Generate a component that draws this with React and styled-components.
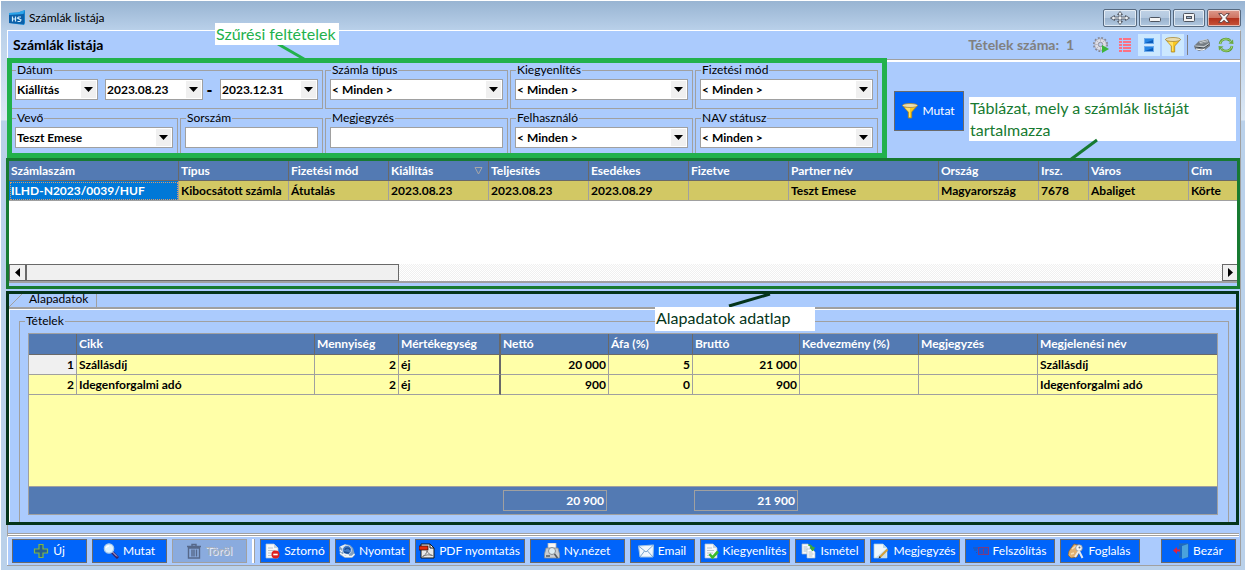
import React from 'react';
import styled, { createGlobalStyle, css } from 'styled-components';

const GlobalStyle = createGlobalStyle`
  *, *::before, *::after { box-sizing: border-box; }
  body {
    margin: 0;
    font-family: Lato, "Liberation Sans", sans-serif;
    font-size: 12px;
    line-height: 14px;
    color: #000;
    background: #bad1ea;
  }
  button, input, select { font: inherit; color: inherit; }
`;

const panel = '#abcbfd';
const line = '#a0a0a0';
const dark = '#696969';
const headerBlue = '#537ab3';

const Window = styled.div`
  position: relative;
  display: flex;
  flex-direction: column;
  min-height: 100vh;
  overflow: hidden;
  padding: 0 4px 4px 6px;
  border-top: 1px solid #fff;
  border-left: 1px solid #fff;
  background: linear-gradient(#98b4d2 0, #bad1ea 30px, #dce8f5 119px, #bad1ea 120px);
`;

const TitleBar = styled.header`
  display: flex;
  align-items: center;
  gap: 4px;
  height: 29px;
  padding: 5px 0 0 2px;
`;

const WindowTitle = styled.span`
  flex: 1;
`;

const WindowButtons = styled.div`
  display: flex;
  gap: 2px;
  align-self: flex-start;
  margin-top: 3px;
`;

const WindowButton = styled.button`
  display: flex;
  align-items: center;
  justify-content: center;
  width: ${(p) => (p.$wide ? 34 : 32)}px;
  height: 18px;
  padding: 0;
  border: 1px solid #56697f;
  border-radius: 2px;
  box-shadow: inset 0 0 0 1px rgba(255, 255, 255, 0.6);
  background: ${(p) =>
    p.$close
      ? 'linear-gradient(#dd9a8c, #cf7462 48%, #b2301b 50%, #c8543a)'
      : 'linear-gradient(#bfd2e6, #b3c8df 48%, #98b1cc 50%, #b2c9e0)'};
`;

const Client = styled.main`
  display: flex;
  flex: 1;
  flex-direction: column;
  border-top: 1px solid #fff;
  border-right: 1px solid ${line};
  border-bottom: 1px solid ${line};
  background: ${panel};
`;

const HeaderBar = styled.div`
  display: flex;
  align-items: center;
  gap: 2px;
  height: 27px;
  padding: 1px 3px 0 5px;
  border-left: 1px solid #fff;
`;

const PageTitle = styled.h1`
  flex: 1;
  margin: 0;
  font-size: 14px;
  font-weight: 700;
`;

const Count = styled.span`
  margin-right: 14px;
  font-size: 14px;
  font-weight: 700;
  color: #808080;
  white-space: pre;
`;

const ToolButton = styled.button`
  display: flex;
  align-items: center;
  justify-content: center;
  width: 22px;
  height: 22px;
  padding: 0;
  border: 0;
  background: ${(p) => (p.$on ? '#cce8ff' : 'transparent')};
`;

const ToolSeparator = styled.i`
  width: 1px;
  height: 20px;
  margin: 0 1px;
  background: #7f7f7f;
`;

const FilterRow = styled.div`
  display: flex;
  height: 100px;
`;

const FilterBox = styled.form`
  display: grid;
  grid-template-columns: 166px 143px 183px 183px 183px;
  column-gap: 2px;
  row-gap: 2px;
  align-content: start;
  flex: none;
  padding-right: 4px;
  border: 5px solid #22b14c;
  overflow: hidden;
`;

const Field = styled.fieldset`
  display: flex;
  align-items: center;
  min-width: 0;
  margin: 0;
  padding: 2px 4px ${(p) => (p.$open ? 5 : 8)}px ${(p) => (p.$first ? 3 : 4)}px;
  border: 1px solid ${line};
  ${(p) => p.$first && css`border-left: 0;`}
  ${(p) => p.$open && css`border-bottom: 0;`}
  ${(p) => p.$span && css`grid-column: span 2;`}
`;

const Legend = styled.legend`
  height: 14px;
  margin-left: 1px;
  padding: 0 1px;
`;

const SelectWrap = styled.span`
  position: relative;
  display: block;
  flex: ${(p) => p.$grow || '1'};
  min-width: 0;
`;

const Select = styled.select`
  display: block;
  width: 100%;
  height: 21px;
  padding: 0 20px 0 1px;
  border: 1px solid ${line};
  border-radius: 0;
  appearance: none;
  background: #fff;
  font-weight: 700;
`;

const SelectArrow = styled.span`
  position: absolute;
  top: 2px;
  right: 2px;
  display: flex;
  align-items: center;
  justify-content: center;
  width: 15px;
  height: 17px;
  background: #f0f0f0;
  pointer-events: none;
`;

const TextInput = styled.input`
  width: 100%;
  height: 21px;
  padding: 0 2px;
  border: 1px solid ${line};
  font-weight: 700;
`;

const Dash = styled.span`
  width: 17px;
  padding-right: 4px;
  text-align: center;
  font-size: 16px;
  font-weight: 900;
`;

const Gap = styled.span`
  width: 7px;
`;

const FilterAside = styled.div`
  flex: 1;
  margin-top: 1px;
  padding: 31px 0 0 7px;
  border-top: 1px solid ${line};
  box-shadow: inset 0 2px 0 #fff;
`;

const Button = styled.button`
  display: flex;
  align-items: center;
  justify-content: center;
  gap: 4px;
  width: ${(p) => p.$w}px;
  height: ${(p) => p.$h || 24}px;
  padding: 0 1px 0 0;
  border: 1px solid #6a6a6a;
  background: #0064fa;
  color: #fff;
  white-space: nowrap;

  &:disabled {
    border-color: ${line};
    background: #8aabde;
    color: #a9afba;
    text-shadow: 1px 1px 0 #e6ebf4;
  }
`;

const ListPanel = styled.section`
  display: flex;
  flex-direction: column;
  height: 131px;
  margin-left: -1px;
  padding-bottom: 3px;
  border: 3px solid #177a31;
`;

const ListBody = styled.div`
  flex: 1;
  overflow: hidden;
  background: #fff;
`;

const Table = styled.table`
  width: 100%;
  table-layout: fixed;
  border-collapse: separate;
  border-spacing: 0;
  font-weight: 700;
`;

const Col = styled.col`
  width: ${(p) => (p.$w ? `${p.$w}px` : 'auto')};
`;

const Th = styled.th`
  height: ${(p) => p.$h || 20}px;
  padding: 0 2px;
  border-right: ${(p) => (p.$thick ? 2 : 1)}px solid ${dark};
  border-bottom: 1px solid ${dark};
  background: ${headerBlue};
  color: #fff;
  text-align: left;
  white-space: nowrap;
  overflow: hidden;
  &:last-child { border-right: 0; }
`;

const ThContent = styled.span`
  display: flex;
  align-items: center;
  justify-content: space-between;
  padding-right: 3px;
`;

const Td = styled.td`
  height: 20px;
  padding: 0 2px;
  border-right: ${(p) => (p.$thick ? `2px solid ${dark}` : `1px solid ${line}`)};
  border-bottom: 1px solid ${line};
  background: ${(p) => p.$bg || '#ffffa8'};
  text-align: ${(p) => (p.$right ? 'right' : 'left')};
  white-space: nowrap;
  overflow: hidden;
  &:last-child { border-right: 0; }
  ${(p) =>
    p.$selected &&
    css`
      background: #0078d7;
      color: #fff;
      outline: 1px dotted #d99a68;
      outline-offset: -2px;
    `}
`;

const ScrollBar = styled.div`
  display: flex;
  height: 19px;
  border-bottom: 2px solid ${line};
  background: repeating-conic-gradient(#fff 0 25%, #f0f0f0 0 50%) 0 0 / 2px 2px;
`;

const ScrollButton = styled.button`
  display: flex;
  align-items: center;
  justify-content: center;
  width: 17px;
  height: 17px;
  padding: 0;
  border: 1px solid ${dark};
  background: #f0f0f0;
  &:last-child {
    width: 15px;
    border-right: 0;
  }
`;

const ScrollThumb = styled.div`
  width: 373px;
  height: 17px;
  margin-right: auto;
  border: 1px solid ${dark};
  background: #f0f0f0;
`;

const DetailPanel = styled.section`
  display: flex;
  flex: 1;
  flex-direction: column;
  margin: 2px 1px 0 -1px;
  border: 3px solid #04341a;
`;

const TabStrip = styled.div`
  display: flex;
  height: 15px;
  border-bottom: 2px solid ${line};
`;

const Tab = styled.button`
  display: flex;
  align-items: flex-start;
  width: 72px;
  height: 13px;
  padding: 0 0 0 4px;
  border: 0;
  border-right: 1px solid ${line};
  background: none;
  line-height: 10px;
`;

const TabPage = styled.div`
  display: flex;
  flex: 1;
  padding: 4px 7px 0 9px;
  border-top: 1px solid #fff;
  border-left: 1px solid #fff;
`;

const ItemsGroup = styled.fieldset`
  display: flex;
  flex: 1;
  flex-direction: column;
  min-width: 0;
  margin: 0;
  padding: 5px 10px 7px 8px;
  border: 1px solid ${line};
  border-bottom: 0;
`;

const ItemsLegend = styled(Legend)`
  margin-left: -3px;
`;

const ItemsGrid = styled.div`
  display: flex;
  flex: 1;
  flex-direction: column;
  border: 1px solid ${line};
  background: #ffffa8;
`;

const ItemsFooter = styled.div`
  display: flex;
  gap: 87px;
  height: 28px;
  margin-top: auto;
  padding: 3px 0 0 474px;
  border-top: 1px solid ${line};
  background: ${headerBlue};
`;

const Sum = styled.output`
  width: 104px;
  height: 21px;
  padding: 0 2px;
  border: 1px solid ${line};
  color: #fff;
  font-weight: 700;
  line-height: 20px;
  text-align: right;
`;

const Divider = styled.div`
  height: 12px;
  margin-right: 1px;
  border-left: 1px solid ${line};
  border-bottom: 1px solid #fff;
  box-shadow: inset 0 -1px 0 ${line}, inset 0 -2px 0 #fff, inset 0 -3px 0 ${line};
`;

const ActionBar = styled.footer`
  display: flex;
  gap: 5px;
  padding: 2px 4px 2px 4px;
  border-left: 1px solid #fff;
`;

const ActionSeparator = styled.i`
  width: 3px;
  border-left: 2px solid #fff;
  border-right: 1px solid ${line};
`;

const Spacer = styled.span`
  flex: 1;
`;

const Note = styled.div`
  position: absolute;
  top: ${(p) => p.$top}px;
  left: ${(p) => p.$left}px;
  width: ${(p) => p.$w}px;
  height: ${(p) => p.$h}px;
  padding: 0 1px;
  background: #fff;
  color: ${(p) => p.$color};
  font-size: 16px;
  line-height: 22px;
`;

const Pointer = styled.svg`
  position: absolute;
  top: ${(p) => p.$top}px;
  left: ${(p) => p.$left}px;
  fill: none;
  stroke: ${(p) => p.$color};
  stroke-width: 3;
`;

/* ---------- icons ---------- */

const Svg = ({ children }) => (
  <svg width="16" height="16" viewBox="0 0 16 16" aria-hidden="true">
    {children}
  </svg>
);

const AppIcon = () => (
  <Svg>
    <path d="M0 3l9-.5L16 0v13l-1 2-15-2z" fill="#1583cf" />
    <path d="M0 3l9-.5L16 0l-3 6-13 1z" fill="#2ba4ea" />
    <path d="M0 5l15-1v10L0 13z" fill="#0c5fa8" />
    <path d="M3.500 6.500v5M6.500 6.500v5M3.500 9h3M12 7H9.500L8.500 8l3.500 2-1 1.500H8.500" fill="none" stroke="#d4efff" strokeWidth="1.200" />
  </Svg>
);

const MoveIcon = () => (
  <svg width="20" height="14" viewBox="0 0 20 14" aria-hidden="true">
    <path d="M10 .5l2.500 3H11V6h4.500V4.500l4 2.500-4 2.500V8H11v2.500h1.500l-2.500 3-2.500-3H9V8H4.500v1.500L.5 7l4-2.500V6H9V3.500H7.500z" fill="#eef2f6" stroke="#4e5560" strokeWidth=".9" />
  </svg>
);

const MinimizeIcon = () => (
  <svg width="12" height="12" viewBox="0 0 12 12" aria-hidden="true">
    <rect x=".5" y="5.500" width="11" height="4" rx="1" fill="#f4f4f4" stroke="#4e5560" />
  </svg>
);

const MaximizeIcon = () => (
  <svg width="12" height="10" viewBox="0 0 12 10" aria-hidden="true">
    <rect x=".5" y=".5" width="11" height="8" rx="1" fill="#f4f4f4" stroke="#4e5560" />
    <rect x="3.500" y="3.500" width="5" height="2" fill="#9eb4cc" stroke="#4e5560" />
  </svg>
);

const CloseIcon = () => (
  <svg width="12" height="10" viewBox="0 0 12 10" aria-hidden="true">
    <path d="M.7.600h3.200L6 2.800 8.100.600h3.200L7.800 5l3.500 4.400H8.100L6 7.200 3.900 9.400H.7L4.200 5z" fill="#f6f6f6" stroke="#563a3c" strokeWidth=".9" />
  </svg>
);

const GearIcon = () => (
  <Svg>
    <circle cx="7.500" cy="7.500" r="6.500" fill="none" stroke="#85858f" strokeWidth="2" strokeDasharray="1.800 1.600" />
    <circle cx="7.500" cy="7.500" r="5.800" fill="#dedee6" stroke="#a6a6b2" strokeWidth=".7" />
    <path d="M7.500 2v2.500M7.500 10.500V13M2 7.500h2.500M3.700 3.700l1.600 1.600M11.300 3.700L9.700 5.300M3.700 11.300l1.600-1.600" stroke="#b9b9c6" />
    <circle cx="7.500" cy="7.500" r="2.200" fill="#bcd0ee" stroke="#9494a0" />
    <path d="M9 8l7 4-7 4z" fill="#3bb53b" />
  </Svg>
);

const ListIcon = () => (
  <Svg>
    <path d="M2 2h3M2 5h3M2 8h3M2 11h3M2 14h3M6 2h8M6 5h8M6 8h8M6 11h8M6 14h8" stroke="#fb7183" strokeWidth="2" />
  </Svg>
);

const PanelsIcon = () => (
  <Svg>
    <rect x="3.500" y="1.500" width="9" height="5" fill="#2585e4" stroke="#6ba9ec" />
    <rect x="3.500" y="9.500" width="9" height="5" fill="#2585e4" stroke="#6ba9ec" />
    <path d="M4 6h8V3zM4 14h8v-3z" fill="#0b5bb8" />
  </Svg>
);

const FunnelIcon = () => (
  <Svg>
    <path d="M.5 2.500L6.300 9v6h3.400V9l5.800-6.500z" fill="#fbc91f" stroke="#a98425" strokeWidth=".8" />
    <path d="M3 5h5v9H7V9z" fill="#ffe168" />
    <ellipse cx="8" cy="2.500" rx="7.500" ry="2" fill="#e9ddb0" stroke="#a98a3b" strokeWidth=".8" />
  </Svg>
);

const PrinterIcon = () => (
  <Svg>
    <path d="M0 9l5-5 9-2 2 4v3l-5 4-6 1-4-2z" fill="#747c83" />
    <path d="M5 4l8-2 1 3-8 2z" fill="#e8ecef" />
    <path d="M5 5l8-2M5.500 6.500l8-2" stroke="#5c656c" strokeWidth=".7" />
    <path d="M1 8.500l9 .5 5-3v2l-5 3.500-9-1z" fill="#c4cbd0" />
    <path d="M1 10l9 1 5-3.500" fill="none" stroke="#394147" />
    <path d="M2 12l6 1 3-1" fill="none" stroke="#fff" />
  </Svg>
);

const RefreshIcon = () => (
  <Svg>
    <path d="M2 7c.5-3 3-5 6-5 2 0 3.500.8 4.500 2M14 9c-.5 3-3 5-6 5-2 0-3.500-.8-4.500-2" fill="none" stroke="#5c9c35" strokeWidth="2.600" />
    <path d="M2 7c.5-3 3-5 6-5 2 0 3.500.8 4.500 2M14 9c-.5 3-3 5-6 5-2 0-3.500-.8-4.500-2" fill="none" stroke="#a5d977" strokeWidth="1" />
    <path d="M10.500 6.500l5 .5-.5-4.500zM5.500 9.500L.5 9l.5 4.500z" fill="#6caa40" />
  </Svg>
);

const PlusIcon = () => (
  <Svg>
    <path d="M6 1.500h4V6h4.500v4H10v4.500H6V10H1.500V6H6z" fill="#245f93" stroke="#7cb648" strokeWidth="1.200" />
  </Svg>
);

const SearchIcon = () => (
  <Svg>
    <path d="M9 9l6 6" stroke="#35246b" strokeWidth="3" />
    <path d="M9 8.500l5 5" stroke="#d4c7ee" strokeWidth="1" />
    <circle cx="6" cy="5.500" r="4.700" fill="#dff3ff" stroke="#a9c9ea" strokeWidth="1.200" />
    <path d="M3 5c.5-1.500 1.500-2 3-2" stroke="#fff" strokeWidth="1.500" fill="none" />
  </Svg>
);

const TrashIcon = () => (
  <Svg>
    <path d="M1 3.500h14M6 3V1.500h4V3M2.500 5h11v10h-11zM6 6.500v7M8 6.500v7M10.500 6.500v7" fill="none" stroke="#56688a" strokeWidth="1.400" />
  </Svg>
);

const Sheet = () => (
  <>
    <path d="M2 1h8l4 4v10H2z" fill="#f5f8fa" stroke="#b6c3cd" strokeWidth=".7" />
    <path d="M10 1v4h4z" fill="#c3d3de" />
    <path d="M4 5h5M4 7.500h7M4 10h6M4 12.500h5" stroke="#b3c0c8" strokeWidth=".9" />
  </>
);

const StornoIcon = () => (
  <Svg>
    <Sheet />
    <circle cx="11.500" cy="11.500" r="4" fill="#de2220" />
    <path d="M9.300 11.500h4.400" stroke="#fff" strokeWidth="1.600" />
  </Svg>
);

const PrintIcon = () => (
  <Svg>
    <path d="M0 4l6-3 5 1 3 3 2 7-3 3H6l-5-3z" fill="#7f9fc0" />
    <path d="M1 3.500l5-2 3 1-5 4z" fill="#e7f0f6" />
    <circle cx="8" cy="7" r="4.500" fill="#3b76c4" stroke="#cfe0f0" strokeWidth=".8" />
    <path d="M6 7c0-2 4-3 5 0M5 9l5 1" stroke="#174c93" fill="none" strokeWidth="1.300" />
    <path d="M1 10l5 3.500h7l2.500-2.500M1 7l2 2M4 11l6 1.500" stroke="#f0f5f8" fill="none" strokeWidth="1.300" />
  </Svg>
);

const PdfIcon = () => (
  <Svg>
    <path d="M2 1h9l4 4v10H2z" fill="#e8e8e8" stroke="#171717" />
    <path d="M11 1v4h4z" fill="#fff" stroke="#171717" />
    <rect x="0" y="3" width="9" height="4" fill="#e22d0c" stroke="#2b0b04" strokeWidth=".7" />
    <path d="M3.500 13.500C6 12.500 8 10 8 7.500c1 3 3 4.500 5.500 5C10 11.500 7 11.500 3.500 13.500z" fill="none" stroke="#777" />
  </Svg>
);

const PreviewIcon = () => (
  <Svg>
    <path d="M4 6V0h8v6z" fill="#f7f7f7" stroke="#aeb4b8" strokeWidth=".8" />
    <path d="M2 5h12l1.500 6v4H.5v-4z" fill="#c9cdd1" stroke="#858b91" strokeWidth=".8" />
    <circle cx="8" cy="8" r="3.500" fill="#dcebf2" stroke="#858b91" />
    <path d="M2 13h4M10.500 11l3 4" stroke="#53595f" strokeWidth="1.600" />
  </Svg>
);

const MailIcon = () => (
  <Svg>
    <path d="M.5 3l15-1-.5 12H2z" fill="#f0f7fd" stroke="#9fc2e2" />
    <path d="M.5 3L8 9l7.500-7M2 14l4.500-6M15 14L9.500 8" fill="none" stroke="#7ba6cf" />
  </Svg>
);

const PaidIcon = () => (
  <Svg>
    <Sheet />
    <path d="M6.500 11l3 3.500L15 8.500" fill="none" stroke="#3dba2b" strokeWidth="2.600" />
  </Svg>
);

const RepeatIcon = () => (
  <Svg>
    <path d="M1 1h6l2 2v8H1z" fill="#f4f8fb" stroke="#a9bac7" strokeWidth=".7" />
    <path d="M2.500 4h4M2.500 6h4M2.500 8h3" stroke="#b3c0c8" />
    <path d="M6 6h5l3 3v6H6z" fill="#fff" stroke="#a9bac7" strokeWidth=".7" />
    <path d="M7.500 9h4M7.500 11h5M7.500 13h4" stroke="#b3c0c8" />
    <path d="M7 2c3-.5 4.500 1 4.500 3M9.500 4.500h4L11.500 8z" fill="#3dab33" stroke="#3dab33" />
  </Svg>
);

const NoteIcon = () => (
  <Svg>
    <path d="M1 1h9l4 4v10H1z" fill="#eff7fc" stroke="#a8c9df" strokeWidth=".7" />
    <path d="M10 1v4h4z" fill="#b9d9ea" />
    <path d="M2 15l11-9v9z" fill="#c6dfef" />
    <path d="M7 14l7.500-7.500" stroke="#d2a03c" strokeWidth="2" />
    <path d="M5.500 15.500l1-2.500 1.500 1.500z" fill="#3a3226" />
  </Svg>
);

const NoticeIcon = () => (
  <svg width="16" height="16" viewBox="0 0 16 16" aria-hidden="true">
    <path d="M0 5h5M1 7h3M3 9.500h1" stroke="#2e549f" />
    <rect x="5.500" y="4.500" width="10" height="7" fill="#1558d8" stroke="#7d3a80" />
    <path d="M10.500 6v2.500M10.500 9.500v1" stroke="#a82c5c" />
  </svg>
);

const BookingIcon = () => (
  <Svg>
    <path d="M1 8l5-7 4 1 2 4-3 8-6 1-3-3z" fill="#e0b070" stroke="#8a602c" strokeWidth=".7" />
    <path d="M4 6l4-3M3 11l3-1" stroke="#f7e0b4" strokeWidth="1.500" />
    <circle cx="11" cy="5" r="3.300" fill="#f2f4f5" stroke="#8a9298" strokeWidth=".8" />
    <path d="M11 8l-4 6M11 8l3.500 7" stroke="#e5eaee" strokeWidth="2" />
    <circle cx="11.500" cy="4.500" r="1" fill="#66707a" />
  </Svg>
);

const ExitIcon = () => (
  <Svg>
    <path d="M6 1h9v13H6" fill="#1a68c4" stroke="#2c6ea6" />
    <path d="M9 3l6-2v13l-6 2z" fill="#4aa3dc" />
    <path d="M0 7.500L4 4v2.500h3v2H4V11z" fill="#e0203c" />
  </Svg>
);

const SortIcon = () => (
  <svg width="9" height="8" viewBox="0 0 9 8" aria-hidden="true">
    <path d="M1 .5h7L4.500 7z" fill="none" stroke="#a8a8a8" />
  </svg>
);

const ArrowDown = () => (
  <svg width="9" height="5" viewBox="0 0 9 5" aria-hidden="true">
    <path d="M0 0h9L4.500 5z" />
  </svg>
);

const ArrowSide = ({ right }) => (
  <svg width="5" height="9" viewBox="0 0 5 9" aria-hidden="true">
    <path d={right ? 'M0 0v9l5-4.500z' : 'M5 0v9L0 4.500z'} />
  </svg>
);

const TabSlope = styled.svg`
  display: block;
  flex: none;
  width: 16px;
  height: 13px;
  fill: none;
  stroke: ${line};
`;

/* ---------- parts ---------- */

const Combo = ({ id, value, label, grow }) => (
  <SelectWrap $grow={grow}>
    <Select id={id} aria-label={label} defaultValue={value}>
      <option>{value}</option>
    </Select>
    <SelectArrow>
      <ArrowDown />
    </SelectArrow>
  </SelectWrap>
);

const ComboField = ({ id, label, value, ...rest }) => (
  <Field {...rest}>
    <Legend>
      <label htmlFor={id}>{label}</label>
    </Legend>
    <Combo id={id} value={value} />
  </Field>
);

const TextField = ({ id, label, ...rest }) => (
  <Field {...rest}>
    <Legend>
      <label htmlFor={id}>{label}</label>
    </Legend>
    <TextInput id={id} type="text" />
  </Field>
);

const invoiceColumns = [
  ['Számlaszám', 170, 'ILHD-N2023/0039/HUF'],
  ['Típus', 110, 'Kibocsátott számla'],
  ['Fizetési mód', 100, 'Átutalás'],
  ['Kiállítás', 100, '2023.08.23'],
  ['Teljesítés', 100, '2023.08.23'],
  ['Esedékes', 100, '2023.08.29'],
  ['Fizetve', 100, ''],
  ['Partner név', 150, 'Teszt Emese'],
  ['Ország', 100, 'Magyarország'],
  ['Irsz.', 50, '7678'],
  ['Város', 100, 'Abaliget'],
  ['Cím', 0, 'Körte'],
];

const itemColumns = [
  ['', 48, true],
  ['Cikk', 238],
  ['Mennyiség', 84, true],
  ['Mértékegység', 102],
  ['Nettó', 108, true],
  ['Áfa (%)', 84, true],
  ['Bruttó', 107, true],
  ['Kedvezmény (%)', 119],
  ['Megjegyzés', 119],
  ['Megjelenési név', 0],
];

const items = [
  ['1', 'Szállásdíj', '2', 'éj', '20 000', '5', '21 000', '', '', 'Szállásdíj'],
  ['2', 'Idegenforgalmi adó', '2', 'éj', '900', '0', '900', '', '', 'Idegenforgalmi adó'],
];

const actions = [
  ['Sztornó', 70, StornoIcon],
  ['Nyomtat', 75, PrintIcon],
  ['PDF nyomtatás', 110, PdfIcon],
  ['Ny.nézet', 95, PreviewIcon],
  ['Email', 65, MailIcon],
  ['Kiegyenlítés', 90, PaidIcon],
  ['Ismétel', 70, RepeatIcon],
  ['Megjegyzés', 90, NoteIcon],
  ['Felszólítás', 90, NoticeIcon],
  ['Foglalás', 80, BookingIcon],
];

export default function App() {
  return (
    <>
      <GlobalStyle />
      <Window>
        <TitleBar>
          <AppIcon />
          <WindowTitle>Számlák listája</WindowTitle>
          <WindowButtons>
            <WindowButton $wide aria-label="Áthelyezés"><MoveIcon /></WindowButton>
            <WindowButton aria-label="Kis méret"><MinimizeIcon /></WindowButton>
            <WindowButton aria-label="Teljes méret"><MaximizeIcon /></WindowButton>
            <WindowButton $wide $close aria-label="Bezárás"><CloseIcon /></WindowButton>
          </WindowButtons>
        </TitleBar>

        <Client>
          <HeaderBar>
            <PageTitle>Számlák listája</PageTitle>
            <Count>{'Tételek száma:  1'}</Count>
            <ToolButton aria-label="Futtatás"><GearIcon /></ToolButton>
            <ToolButton aria-label="Lista"><ListIcon /></ToolButton>
            <ToolButton $on aria-label="Panelek"><PanelsIcon /></ToolButton>
            <ToolButton $on aria-label="Szűrő"><FunnelIcon /></ToolButton>
            <ToolSeparator />
            <ToolButton aria-label="Nyomtatás"><PrinterIcon /></ToolButton>
            <ToolButton aria-label="Frissítés"><RefreshIcon /></ToolButton>
          </HeaderBar>

          <FilterRow>
            <FilterBox>
              <Field $first $span>
                <Legend>Dátum</Legend>
                <Combo label="Dátum típusa" value="Kiállítás" grow="0 0 83px" />
                <Gap />
                <Combo label="Dátumtól" value="2023.08.23" />
                <Dash>-</Dash>
                <Combo label="Dátumig" value="2023.12.31" />
              </Field>
              <ComboField id="type" label="Számla típus" value="< Minden >" />
              <ComboField id="settled" label="Kiegyenlítés" value="< Minden >" />
              <ComboField id="payment" label="Fizetési mód" value="< Minden >" />
              <ComboField id="customer" label="Vevő" value="Teszt Emese" $first $open />
              <TextField id="serial" label="Sorszám" $open />
              <TextField id="remark" label="Megjegyzés" $open />
              <ComboField id="user" label="Felhasználó" value="< Minden >" $open />
              <ComboField id="nav" label="NAV státusz" value="< Minden >" $open />
            </FilterBox>
            <FilterAside>
              <Button $w={70} $h={40}>
                <FunnelIcon />
                Mutat
              </Button>
            </FilterAside>
          </FilterRow>

          <ListPanel>
            <ListBody>
              <Table>
                <colgroup>
                  {invoiceColumns.map(([name, w]) => <Col key={name} $w={w} />)}
                </colgroup>
                <thead>
                  <tr>
                    {invoiceColumns.map(([name]) => (
                      <Th key={name}>
                        {name === 'Kiállítás' ? <ThContent>{name}<SortIcon /></ThContent> : name}
                      </Th>
                    ))}
                  </tr>
                </thead>
                <tbody>
                  <tr>
                    {invoiceColumns.map(([name, , value], i) => (
                      <Td key={name} $bg="#d2c864" $selected={i === 0}>{value}</Td>
                    ))}
                  </tr>
                </tbody>
              </Table>
            </ListBody>
            <ScrollBar>
              <ScrollButton aria-label="Balra"><ArrowSide /></ScrollButton>
              <ScrollThumb />
              <ScrollButton aria-label="Jobbra"><ArrowSide right /></ScrollButton>
            </ScrollBar>
          </ListPanel>

          <DetailPanel>
            <TabStrip>
              <TabSlope viewBox="0 0 16 13"><path d="M0 13L13 0" /></TabSlope>
              <Tab>Alapadatok</Tab>
            </TabStrip>
            <TabPage>
              <ItemsGroup>
                <ItemsLegend>Tételek</ItemsLegend>
                <ItemsGrid>
                  <Table>
                    <colgroup>
                      {itemColumns.map(([name, w]) => <Col key={name} $w={w} />)}
                    </colgroup>
                    <thead>
                      <tr>
                        {itemColumns.map(([name], i) => <Th key={name} $h={21} $thick={i === 3}>{name}</Th>)}
                      </tr>
                    </thead>
                    <tbody>
                      {items.map((row, r) => (
                        <tr key={row[0]}>
                          {row.map((value, i) => (
                            <Td
                              key={itemColumns[i][0]}
                              $right={itemColumns[i][2]}
                              $thick={i === 3}
                              $bg={r === 0 && i === 0 ? '#f0f0f0' : undefined}
                            >
                              {value}
                            </Td>
                          ))}
                        </tr>
                      ))}
                    </tbody>
                  </Table>
                  <ItemsFooter>
                    <Sum>20 900</Sum>
                    <Sum>21 900</Sum>
                  </ItemsFooter>
                </ItemsGrid>
              </ItemsGroup>
            </TabPage>
          </DetailPanel>

          <Divider />
          <ActionBar>
            <Button $w={75}><PlusIcon />Új</Button>
            <Button $w={75}><SearchIcon />Mutat</Button>
            <Button $w={75} disabled><TrashIcon />Töröl</Button>
            <ActionSeparator />
            {actions.map(([name, w, Icon]) => (
              <Button key={name} $w={w}><Icon />{name}</Button>
            ))}
            <Spacer />
            <Button $w={75}><ExitIcon />Bezár</Button>
          </ActionBar>
        </Client>

        <Pointer $top={39} $left={274} $color="#22b14c" width="34" height="22"><path d="M3 4L29 19" /></Pointer>
        <Note $top={22} $left={214} $w={124} $h={22} $color="#22b14c">Szűrési feltételek</Note>
        <Note $top={96} $left={968} $w={267} $h={44} $color="#177a31">
          Táblázat, mely a számlák listáját<br />tartalmazza
        </Note>
        <Pointer $top={135} $left={1064} $color="#177a31" width="36" height="26"><path d="M32 4L5 24" /></Pointer>
        <Pointer $top={290} $left={725} $color="#04341a" width="50" height="20"><path d="M3 15L44 3" /></Pointer>
        <Note $top={306} $left={654} $w={160} $h={24} $color="#04341a">Alapadatok adatlap</Note>
      </Window>
    </>
  );
}
